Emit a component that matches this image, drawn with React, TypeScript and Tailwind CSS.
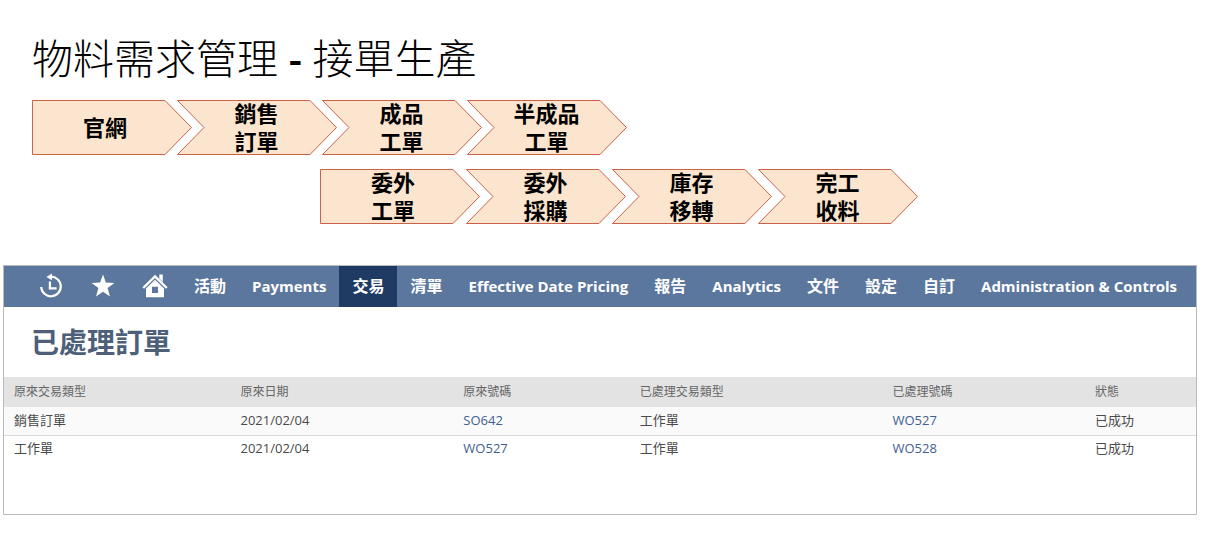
import React from "react";

type Step = { lines: string[]; first?: boolean };

const salesSteps: Step[] = [
  { lines: ["官網"], first: true },
  { lines: ["銷售", "訂單"] },
  { lines: ["成品", "工單"] },
  { lines: ["半成品", "工單"] },
];

const outsourceSteps: Step[] = [
  { lines: ["委外", "工單"], first: true },
  { lines: ["委外", "採購"] },
  { lines: ["庫存", "移轉"] },
  { lines: ["完工", "收料"] },
];

const menu = [
  { label: "活動" },
  { label: "Payments", latin: true },
  { label: "交易", current: true },
  { label: "清單" },
  { label: "Effective Date Pricing", latin: true },
  { label: "報告" },
  { label: "Analytics", latin: true },
  { label: "文件" },
  { label: "設定" },
  { label: "自訂" },
  { label: "Administration & Controls", latin: true },
];

const orders = [
  { type: "銷售訂單", date: "2021/02/04", source: "SO642", doneType: "工作單", done: "WO527", status: "已成功" },
  { type: "工作單", date: "2021/02/04", source: "WO527", doneType: "工作單", done: "WO528", status: "已成功" },
];

function Chevron({ step }: { step: Step }) {
  return (
    <li className="relative flex h-[55px] w-40 shrink-0 items-center justify-center">
      <svg className="absolute inset-0 h-full w-full" viewBox="0 0 160 55" aria-hidden="true">
        <path
          d={step.first ? "M.5 .5H133L159.5 27.5L133 54.5H.5Z" : "M.5 .5H133L159.5 27.5L133 54.5H.5L27 27.5Z"}
          fill="#fbe5cf"
          stroke="#cb6148"
        />
      </svg>
      <span className={"relative flex flex-col items-center pb-0.5 text-[22px] leading-7 font-bold " + (step.first ? "pr-3.5" : "pr-px")}>
        {step.lines.map((line) => (
          <span key={line}>{line}</span>
        ))}
      </span>
    </li>
  );
}

function HistoryIcon() {
  return (
    <svg className="size-6 overflow-visible" viewBox="0 0 24 24" fill="none" stroke="currentColor" aria-hidden="true">
      <path d="M11.5 2.7A9.8 9.8 0 1 1 2.2 13" strokeWidth="2.2" />
      <path d="M7.4 2.9L13 -.4V6.2Z" fill="currentColor" stroke="none" />
      <path d="M10.9 7.5V14.4H17.6" strokeWidth="2.2" />
    </svg>
  );
}

function StarIcon() {
  return (
    <svg className="size-6" viewBox="0 0 24 24" fill="currentColor" aria-hidden="true">
      <path d="M12 .5L14.9 8.6L23.4 8.9L16.6 14.1L19 22.6L12 17.7L5 22.6L7.4 14.1L.6 8.9L9.1 8.6Z" />
    </svg>
  );
}

function HomeIcon() {
  return (
    <svg className="h-6 w-[26px]" viewBox="0 0 26 24" fill="currentColor" aria-hidden="true">
      <path d="M1.2 14L13 2.4L24.8 14" fill="none" stroke="currentColor" strokeWidth="2.4" />
      <path d="M17.3 .5H20.8V8L17.3 4.6Z" />
      <path fillRule="evenodd" d="M13 5.8L22 14.6V23.2H4V14.6ZM10 12.8V19H16V12.8Z" />
    </svg>
  );
}

const iconItems = [
  { label: "最近記錄", icon: <HistoryIcon /> },
  { label: "捷徑", icon: <StarIcon /> },
  { label: "首頁", icon: <HomeIcon /> },
];

export default function App() {
  return (
    <main className="min-h-screen bg-white pt-8 pb-9 font-['Open_Sans','Noto_Sans_CJK_TC',sans-serif] text-black">
      <h1 className="px-8 text-[41px] leading-[52px] font-light">
        物料需求管理<span className="font-semibold"> - </span>接單生產
      </h1>

      <ol className="mt-4 flex -space-x-[15px] pl-8">
        {salesSteps.map((step) => (
          <Chevron key={step.lines.join("")} step={step} />
        ))}
      </ol>
      <ol className="mt-3.5 flex -space-x-[14px] pl-80">
        {outsourceSteps.map((step) => (
          <Chevron key={step.lines.join("")} step={step} />
        ))}
      </ol>

      <section className="mt-[41px] mr-2 ml-[3px] border border-[#b9bbbf] pb-[51px]">
        <nav className="flex h-[41px] items-stretch bg-[#5c779e] pl-[21px] text-white">
          {iconItems.map((item) => (
            <button key={item.label} type="button" aria-label={item.label} className="flex w-[52px] items-center justify-center pb-px">
              {item.icon}
            </button>
          ))}
          {menu.map((item) => (
            <a
              key={item.label}
              href="#"
              aria-current={item.current ? "page" : undefined}
              className={
                "flex items-center px-[13px] pb-0.5 leading-5 font-bold whitespace-nowrap " +
                (item.latin ? "text-[15px] " : "text-base ") +
                (item.current ? "bg-[#1f3a63]" : "")
              }
            >
              {item.label}
            </a>
          ))}
        </nav>

        <h2 className="px-[27px] py-4 text-[28px] leading-[38px] font-bold text-[#4d5f79]">已處理訂單</h2>

        <table className="w-full table-fixed border-collapse text-left">
          <colgroup>
            <col className="w-[19%]" />
            <col className="w-[18.7%]" />
            <col className="w-[14.8%]" />
            <col className="w-[21.2%]" />
            <col className="w-[17%]" />
            <col />
          </colgroup>
          <thead className="bg-[#e3e3e3] text-xs text-[#666666]">
            <tr className="h-[30px]">
              {["原來交易類型", "原來日期", "原來號碼", "已處理交易類型", "已處理號碼", "狀態"].map((head) => (
                <th key={head} scope="col" className="px-[10px] font-normal">
                  {head}
                </th>
              ))}
            </tr>
          </thead>
          <tbody className="text-[13px] leading-5 text-[#4a4a4a]">
            {orders.map((order) => (
              <tr key={order.done} className="h-7 border-b border-[#d9d9d9] odd:bg-[#fafafa] last:border-b-0">
                <td className="px-[10px] pb-0.5">{order.type}</td>
                <td className="px-[10px] pb-0.5">{order.date}</td>
                <td className="px-[10px] pb-0.5">
                  <a href="#" className="text-[#42608f]">{order.source}</a>
                </td>
                <td className="px-[10px] pb-0.5">{order.doneType}</td>
                <td className="px-[10px] pb-0.5">
                  <a href="#" className="text-[#42608f]">{order.done}</a>
                </td>
                <td className="px-[10px] pb-0.5">{order.status}</td>
              </tr>
            ))}
          </tbody>
        </table>
      </section>
    </main>
  );
}
